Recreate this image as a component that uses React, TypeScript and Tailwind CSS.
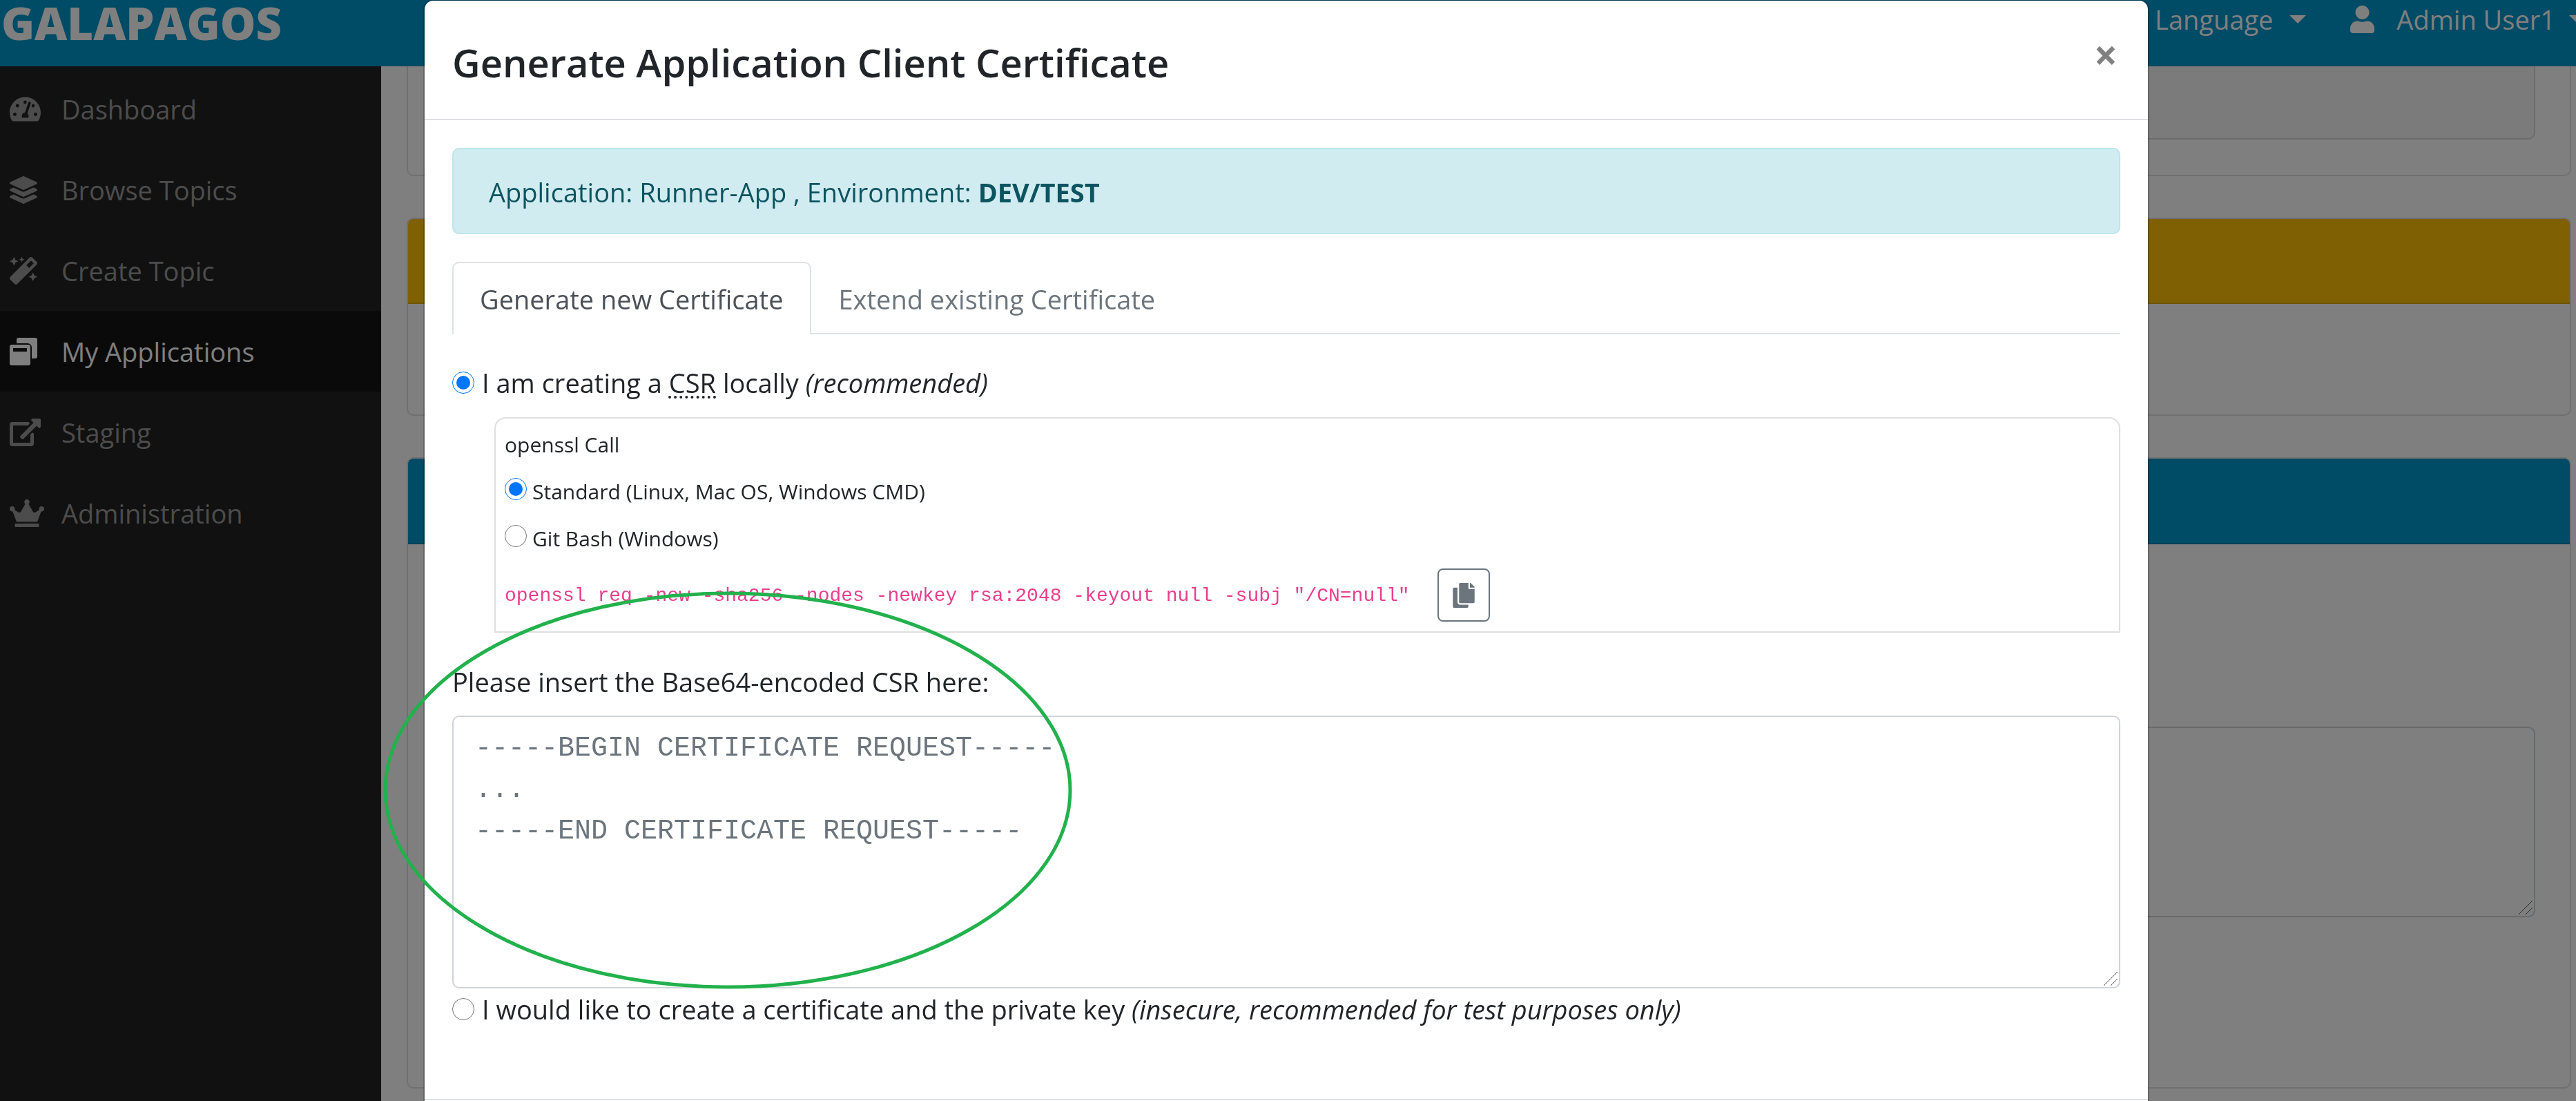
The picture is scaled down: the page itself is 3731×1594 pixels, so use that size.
import type { ReactNode } from "react";
import { FaCopy, FaCrown, FaLayerGroup, FaMagic, FaTachometerAlt, FaUser } from "react-icons/fa";

function WindowsIcon() {
  return (
    <svg viewBox="0 0 40 40" className="h-10 w-10" fill="currentColor" aria-hidden="true">
      <path d="M10 8V3a3 3 0 0 1 3-3h24a3 3 0 0 1 3 3v24a3 3 0 0 1-3 3h-5V14a6 6 0 0 0-6-6z" />
      <path
        fillRule="evenodd"
        d="M3 10h24a3 3 0 0 1 3 3v24a3 3 0 0 1-3 3H3a3 3 0 0 1-3-3V13a3 3 0 0 1 3-3zM5 15v5h20v-5z"
      />
    </svg>
  );
}

function ExternalIcon() {
  return (
    <svg viewBox="0 0 576 512" className="h-10 w-[45px]" fill="currentColor" aria-hidden="true">
      <path d="M576 24v127.984c0 21.461-25.96 31.98-40.971 16.971l-35.707-35.709-243.523 243.523c-9.373 9.373-24.568 9.373-33.941 0l-22.627-22.627c-9.373-9.373-9.373-24.569 0-33.941L442.756 76.676l-35.703-35.705C391.982 25.9 402.656 0 424.024 0H552c13.255 0 24 10.745 24 24zM407.029 270.794l-16 16A23.999 23.999 0 0 0 384 303.765V448H64V128h264a24.003 24.003 0 0 0 16.97-7.029l16-16C376.089 89.851 365.381 64 344 64H48C21.49 64 0 85.49 0 112v352c0 26.51 21.49 48 48 48h352c26.51 0 48-21.49 48-48V287.764c0-21.382-25.852-32.09-40.971-16.97z" />
    </svg>
  );
}

const navItems: { label: string; icon: ReactNode; active?: boolean }[] = [
  { label: "Dashboard", icon: <FaTachometerAlt className="h-10 w-[45px]" /> },
  { label: "Browse Topics", icon: <FaLayerGroup className="h-10 w-10" /> },
  { label: "Create Topic", icon: <FaMagic className="h-10 w-10" /> },
  { label: "My Applications", icon: <WindowsIcon />, active: true },
  { label: "Staging", icon: <ExternalIcon /> },
  { label: "Administration", icon: <FaCrown className="h-10 w-[50px]" /> },
];

function Caret() {
  return (
    <svg viewBox="0 0 24 12" className="h-3 w-6" fill="currentColor" aria-hidden="true">
      <path d="M0 0h24L12 12z" />
    </svg>
  );
}

function ResizeGrip({ className }: { className: string }) {
  return (
    <svg viewBox="0 0 20 20" className={"pointer-events-none absolute h-5 w-5 " + className} stroke="#555" aria-hidden="true">
      <path d="M0 20 20 0M10 20 20 10" />
    </svg>
  );
}

function Radio({ id, name, className, defaultChecked }: { id: string; name: string; className: string; defaultChecked?: boolean }) {
  return (
    <input
      type="radio"
      id={id}
      name={name}
      defaultChecked={defaultChecked}
      className={
        "h-8 w-8 shrink-0 appearance-none rounded-full border border-[#767676] bg-clip-content p-[5px] checked:border-[#0075ff] checked:bg-[#0075ff] " +
        className
      }
    />
  );
}

function TopBar() {
  return (
    <header className="flex h-24 shrink-0 items-start justify-between bg-[#0096cc] text-white">
      <a href="#home" className="pl-0.5 text-[65px] font-extrabold leading-[66px]">
        GALAPAGOS
      </a>
      <div className="-mr-3.5 flex h-14 items-center gap-16 whitespace-nowrap">
        <button type="button" className="flex items-center gap-6">
          Language
          <Caret />
        </button>
        <button type="button" className="flex items-center gap-5">
          <FaUser className="mr-3 h-10 w-[35px]" />
          Admin User1
          <Caret />
        </button>
      </div>
    </header>
  );
}

function Sidebar() {
  return (
    <nav className="w-[552px] shrink-0 bg-[#222] pt-[3px]">
      <ul>
        {navItems.map((item) => (
          <li key={item.label}>
            <a
              href="#nav"
              className={
                item.active
                  ? "flex h-[117px] items-center bg-[#141414] pl-3.5 text-white"
                  : "flex h-[117px] items-center pl-3.5 text-[#999]"
              }
            >
              <span className="w-[75px] shrink-0">{item.icon}</span>
              {item.label}
            </a>
          </li>
        ))}
      </ul>
    </nav>
  );
}

function BackgroundCards() {
  return (
    <main className="flex min-w-0 grow flex-col gap-[60px] pl-[37px] pr-[7px]">
      <section className="h-[159px] rounded-b-[10px] border-2 border-t-0 border-black/12 px-[50px]">
        <div className="h-[106px] rounded-b-[10px] border-2 border-t-0 border-black/12 bg-[#f7f7f7]" />
      </section>
      <section className="h-[287px] overflow-hidden rounded-[10px] border-2 border-black/12">
        <div className="h-[123px] border-b-2 border-black/12 bg-[#ffc107]" />
      </section>
      <section className="h-[914px] overflow-hidden rounded-[10px] border-2 border-black/12">
        <div className="h-[124px] border-b-2 border-black/12 bg-[#0096cc]" />
        <div className="relative px-[50px] pt-[264px]">
          <textarea
            aria-label="Description"
            className="block h-[276px] w-full resize-none rounded-[10px] border-2 border-[#ced4da] bg-white"
          />
          <ResizeGrip className="bottom-1 right-[54px]" />
        </div>
      </section>
    </main>
  );
}

function CertificateDialog() {
  return (
    <div
      role="dialog"
      aria-labelledby="dialog-title"
      className="relative w-full max-w-[2500px] self-start rounded-t-[14px] border-x-2 border-t border-black/20 bg-white bg-clip-padding text-[#212529]"
    >
      <div className="flex items-start justify-between border-b-2 border-[#dee2e6] pl-10 pr-11 pt-11 pb-[37px]">
        <h4 id="dialog-title" className="text-[56px] font-semibold leading-[90px]">
          Generate Application Client Certificate
        </h4>
        <button type="button" aria-label="Close" className="text-[60px] font-bold leading-[68px] text-[#808080]">
          ×
        </button>
      </div>

      <div className="px-10 pt-10 pb-[100px]">
        <div className="rounded-[10px] border-2 border-[#bee5eb] bg-[#d1ecf1] px-[51px] pt-8 pb-[29px] text-[#0c5460]">
          Application: Runner-App , Environment: <b>DEV/TEST</b>
        </div>

        <div role="tablist" className="mt-10 flex border-b-2 border-[#dee2e6]">
          <button
            type="button"
            role="tab"
            aria-selected="true"
            className="-mb-0.5 rounded-t-[10px] border-2 border-b-0 border-[#dee2e6] bg-white px-[38px] pt-[22px] pb-[21px] text-[#495057]"
          >
            Generate new Certificate
          </button>
          <button type="button" role="tab" aria-selected="false" className="px-10 pt-6 pb-[19px] text-[#6c757d]">
            Extend existing Certificate
          </button>
        </div>

        <div className="mt-10 flex items-center gap-[11px]">
          <Radio id="mode-csr" name="mode" defaultChecked className="" />
          <label htmlFor="mode-csr">
            I am creating a{" "}
            <abbr title="Certificate Signing Request" className="underline decoration-dotted decoration-4 underline-offset-4">
              CSR
            </abbr>{" "}
            locally <i>(recommended)</i>
          </label>
        </div>

        <div className="mt-5 ml-[61px] flex flex-col rounded-t-2xl border-2 border-[#dfdfdf] px-[13px] py-3.5 text-[30px] leading-[48px]">
          <p>openssl Call</p>
          <div className="mt-5 flex items-start gap-2">
            <Radio id="shell-standard" name="shell" defaultChecked className="mt-1" />
            <label htmlFor="shell-standard">Standard (Linux, Mac OS, Windows CMD)</label>
          </div>
          <div className="mt-5 flex items-start gap-2">
            <Radio id="shell-git" name="shell" className="mt-1" />
            <label htmlFor="shell-git">Git Bash (Windows)</label>
          </div>
          <div className="mt-[19px] flex items-center gap-10">
            <code className="pt-0.5 font-['Liberation_Mono',monospace] text-[28px] text-[#e83e8c]">
              openssl req -new -sha256 -nodes -newkey rsa:2048 -keyout null -subj "/CN=null"
            </code>
            <button
              type="button"
              aria-label="Copy command"
              className="flex h-[77px] w-[76px] items-center justify-center rounded-lg border-2 border-[#6c757d] text-[#6c757d]"
            >
              <FaCopy className="h-9 w-8" />
            </button>
          </div>
        </div>

        <label htmlFor="csr" className="mt-[41px] mb-[19px] block">
          Please insert the Base64-encoded CSR here:
        </label>
        <div className="relative">
          <textarea
            id="csr"
            rows={6}
            placeholder={"-----BEGIN CERTIFICATE REQUEST-----\n...\n-----END CERTIFICATE REQUEST-----"}
            className="block w-full resize-none rounded-[10px] border-2 border-[#ced4da] bg-white px-[31px] pt-4 pb-[15px] font-['Liberation_Mono',monospace] text-[40px] leading-[60px] placeholder:text-[#6c757d]"
          />
          <ResizeGrip className="bottom-1 right-1" />
        </div>

        <div className="flex items-center gap-[11px]">
          <Radio id="mode-key" name="mode" className="" />
          <label htmlFor="mode-key">
            I would like to create a certificate and the private key{" "}
            <i>(insecure, recommended for test purposes only)</i>
          </label>
        </div>
      </div>
      <div className="h-32 border-t-2 border-[#dee2e6]" />

      {/* Highlight around the CSR input */}
      <svg
        viewBox="0 0 998 576"
        className="pointer-events-none absolute top-[855px] left-[-60px] h-[576px] w-[998px]"
        fill="none"
        stroke="#22b14c"
        strokeWidth="5"
        aria-hidden="true"
      >
        <ellipse cx="499" cy="288" rx="496" ry="285" />
      </svg>
    </div>
  );
}

export default function App() {
  return (
    <div className="relative flex h-screen flex-col overflow-hidden bg-white font-['Open_Sans',sans-serif] text-[38px] leading-[60px]">
      <TopBar />
      <div className="flex min-h-0 grow overflow-hidden">
        <Sidebar />
        <BackgroundCards />
      </div>
      <div className="fixed inset-0 bg-black/50" />
      <div className="fixed inset-0 flex justify-center overflow-hidden pr-[5px]">
        <CertificateDialog />
      </div>
    </div>
  );
}
